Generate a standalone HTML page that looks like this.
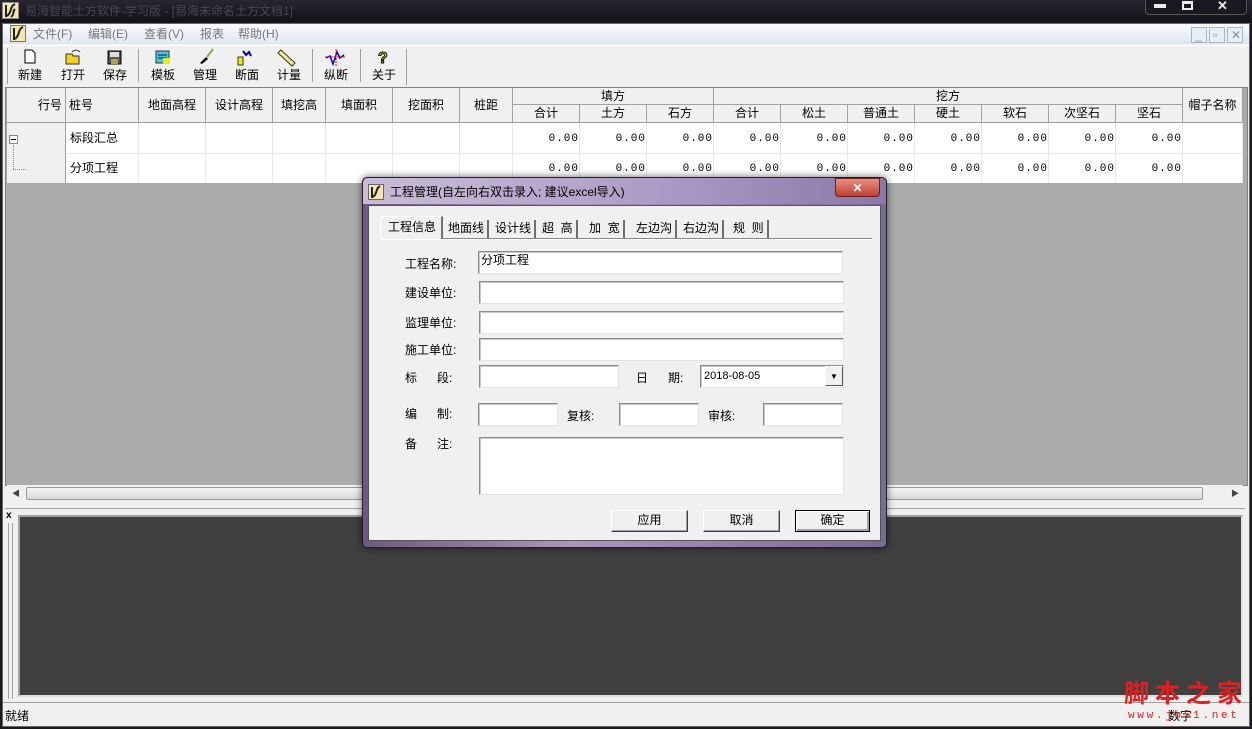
<!DOCTYPE html>
<html><head><meta charset="utf-8"><style>
*{box-sizing:border-box;margin:0;padding:0}
body{width:1252px;height:729px;overflow:hidden;background:#1c1a20;font-family:"Liberation Sans","WenQuanYi Zen Hei","Noto Sans CJK SC",sans-serif;font-size:12px;color:#000;position:relative}
.a{position:absolute}
.t{position:absolute;white-space:nowrap;line-height:14px}
.hc{position:absolute;background:#f0f0f0;border-right:1px solid #a0a0a0;border-bottom:1px solid #a0a0a0;text-align:center;line-height:16px}
.vc{position:absolute;text-align:right;font-family:"Liberation Mono",monospace;font-size:11px;line-height:14px;letter-spacing:1px}
.inp{position:absolute;background:#fff;border:1px solid #8a8a8a;border-right-color:#e4e4e4;border-bottom-color:#e4e4e4;box-shadow:inset 1px 1px 0 #c8c8c8}
.btn{position:absolute;background:#f0f0f0;border:1px solid #fff;border-right-color:#404040;border-bottom-color:#404040;box-shadow:inset -1px -1px 0 #a0a0a0;text-align:center;line-height:18px}
.tab{position:absolute;top:220px;height:18px;line-height:16px;border-right:2px solid #707070;padding:0 3px}
</style></head><body>
<div class="a" style="left:0;top:0;width:1252px;height:22px;background:linear-gradient(#2a2630,#141218)"></div>
<div class="a" style="left:2px;top:2px;width:17px;height:17px;background:#f4e6b0;border:1px solid #888"><svg width="15" height="15"><path d="M3 14 L3 2 M12 1 C6 4 10 8 4 13 M12 6 C9 9 12 11 8 14" stroke="#222" stroke-width="2" fill="none"/></svg></div>
<div class="t" style="left:25px;top:4px;color:#4a4550;font-size:12px">易海智能土方软件-学习版 - [易海未命名土方文档1]</div>
<div class="a" style="left:1145px;top:0;width:102px;height:15px;border:1px solid #555;border-top:none;border-radius:0 0 4px 4px;background:#1a1820"></div>
<div class="a" style="left:1154px;top:4px;width:12px;height:4px;background:#eee"></div>
<div class="a" style="left:1182px;top:1px;width:11px;height:9px;border:2px solid #eee;border-top-width:3px"></div>
<div class="t" style="left:1217px;top:-1px;color:#eee;font-weight:bold;font-size:13px">✕</div>
<div class="a" style="left:2px;top:23px;width:1248px;height:704px;background:#f0f0f0;border:1px solid #666"></div>
<div class="a" style="left:3px;top:24px;width:1246px;height:20px;background:linear-gradient(#fafcff,#dfe6f0)"></div>
<div class="a" style="left:10px;top:25px;width:16px;height:17px;background:#f4e6b0;border:1px solid #777"><svg width="14" height="15"><path d="M3 14 L3 2 M12 1 C6 4 10 8 4 13" stroke="#222" stroke-width="2" fill="none"/></svg></div>
<div class="t" style="left:33px;top:27px;color:#777">文件(F)</div>
<div class="t" style="left:88px;top:27px;color:#777">编辑(E)</div>
<div class="t" style="left:144px;top:27px;color:#777">查看(V)</div>
<div class="t" style="left:200px;top:27px;color:#777">报表</div>
<div class="t" style="left:238px;top:27px;color:#777">帮助(H)</div>
<div class="a" style="left:1191px;top:27px;width:16px;height:16px;border:1px solid #a8b8c8;background:#e6eef6"></div>
<div class="a" style="left:1209px;top:27px;width:16px;height:16px;border:1px solid #a8b8c8;background:#e6eef6"></div>
<div class="a" style="left:1227px;top:27px;width:16px;height:16px;border:1px solid #a8b8c8;background:#e6eef6"></div>
<div class="t" style="left:1195px;top:28px;color:#889">_</div><div class="t" style="left:1213px;top:28px;color:#889">▫</div><div class="t" style="left:1231px;top:28px;color:#889">✕</div>
<div class="a" style="left:3px;top:45px;width:1246px;height:42px;background:#f0f0f0;border-top:1px solid #fff"></div>
<div class="a" style="left:7px;top:48px;width:1px;height:36px;background:#a0a0a0"></div>
<div class="a" style="left:138px;top:49px;width:1px;height:33px;background:#a0a0a0"></div>
<div class="a" style="left:312px;top:49px;width:1px;height:33px;background:#a0a0a0"></div>
<div class="a" style="left:360px;top:49px;width:1px;height:33px;background:#a0a0a0"></div>
<div class="a" style="left:406px;top:49px;width:1px;height:36px;background:#a0a0a0"></div>
<svg class="a" style="left:0;top:48px" width="410" height="20">
<path d="M25 2h7l3 3v10h-10z" fill="#fff" stroke="#000"/>
<path d="M66 6h6l1 2h6v8h-13z" fill="#f0d020" stroke="#333"/><path d="M72 4c3-3 6-2 8 0" stroke="#333" fill="none"/>
<rect x="108" y="3" width="13" height="13" fill="#555" stroke="#000"/><rect x="110" y="4" width="9" height="5" fill="#ddd"/><rect x="111" y="11" width="7" height="5" fill="#aa4"/>
<rect x="156" y="3" width="13" height="12" fill="#4cc" stroke="#333"/><path d="M158 7h9M158 10h9" stroke="#00a"/><rect x="163" y="10" width="7" height="6" fill="#ee0"/>
<path d="M200 15 l6-6 l2 2 l-6 5z" fill="#000"/><path d="M207 9 l6-8" stroke="#8a5" stroke-width="2"/>
<rect x="238" y="9" width="5" height="8" fill="#ee0" stroke="#333"/><path d="M243 3 l3 4 l3-3 l2 4" stroke="#00a" stroke-width="2" fill="none"/>
<path d="M281 2 l14 13 l-3 3 l-14-13z" fill="#ee8" stroke="#333"/>
<path d="M326 10 l4-2 l3 8 l4-12 l3 6 l4-3" stroke="#00c" fill="none" stroke-width="1.5"/><path d="M336 1v18M325 9h20" stroke="#e00" stroke-dasharray="2 1"/>
<text x="378" y="15" font-size="16" font-weight="bold" fill="#ee0" stroke="#000" stroke-width="1" font-family="Liberation Sans">?</text>
</svg>
<div class="t" style="left:18px;top:68px">新建</div><div class="t" style="left:61px;top:68px">打开</div><div class="t" style="left:103px;top:68px">保存</div>
<div class="t" style="left:151px;top:68px">模板</div><div class="t" style="left:193px;top:68px">管理</div><div class="t" style="left:235px;top:68px">断面</div><div class="t" style="left:277px;top:68px">计量</div>
<div class="t" style="left:324px;top:68px">纵断</div><div class="t" style="left:372px;top:68px">关于</div>
<div class="a" style="left:5px;top:87px;width:1243px;height:399px;background:#ababab;border:1px solid #808080"></div>
<div class="a" style="left:7px;top:88px;width:1236px;height:95px;background:#fff"></div>
<div class="hc" style="left:7px;top:88px;width:59px;height:35px;text-align:right;padding-right:3px;line-height:34px">行号</div>
<div class="hc" style="left:66px;top:88px;width:73px;height:35px;text-align:left;padding-left:3px;line-height:34px">桩号</div>
<div class="hc" style="left:139px;top:88px;width:67px;height:35px;line-height:34px">地面高程</div>
<div class="hc" style="left:206px;top:88px;width:67px;height:35px;line-height:34px">设计高程</div>
<div class="hc" style="left:273px;top:88px;width:53px;height:35px;line-height:34px">填挖高</div>
<div class="hc" style="left:326px;top:88px;width:67px;height:35px;line-height:34px">填面积</div>
<div class="hc" style="left:393px;top:88px;width:67px;height:35px;line-height:34px">挖面积</div>
<div class="hc" style="left:460px;top:88px;width:53px;height:35px;line-height:34px">桩距</div>
<div class="hc" style="left:513px;top:88px;width:201px;height:17px">填方</div>
<div class="hc" style="left:714px;top:88px;width:469px;height:17px">挖方</div>
<div class="hc" style="left:1183px;top:88px;width:60px;height:35px;line-height:34px">帽子名称</div>
<div class="hc" style="left:513px;top:105px;width:67px;height:18px">合计</div>
<div class="hc" style="left:580px;top:105px;width:67px;height:18px">土方</div>
<div class="hc" style="left:647px;top:105px;width:67px;height:18px">石方</div>
<div class="hc" style="left:714px;top:105px;width:67px;height:18px">合计</div>
<div class="hc" style="left:781px;top:105px;width:67px;height:18px">松土</div>
<div class="hc" style="left:848px;top:105px;width:67px;height:18px">普通土</div>
<div class="hc" style="left:915px;top:105px;width:67px;height:18px">硬土</div>
<div class="hc" style="left:982px;top:105px;width:67px;height:18px">软石</div>
<div class="hc" style="left:1049px;top:105px;width:67px;height:18px">次坚石</div>
<div class="hc" style="left:1116px;top:105px;width:67px;height:18px">坚石</div>
<div class="a" style="left:7px;top:123px;width:59px;height:60px;background:#f0f0f0;border-right:1px solid #a0a0a0"></div>
<div class="a" style="left:9px;top:135px;width:9px;height:9px;border:1px solid #888;background:#fff"></div><div class="a" style="left:11px;top:139px;width:5px;height:1px;background:#000"></div>
<div class="a" style="left:13px;top:145px;width:1px;height:24px;border-left:1px dotted #888"></div><div class="a" style="left:13px;top:169px;width:13px;border-top:1px dotted #888"></div>
<div class="a" style="left:66px;top:153px;width:1177px;height:1px;background:#e8e8e8"></div>
<div class="t" style="left:70px;top:131px">标段汇总</div><div class="t" style="left:70px;top:161px">分项工程</div>
<div id="vals"></div>
<script>
var xs=[513,580,647,714,781,848,915,982,1049,1116,1183,1243,139,206,273,326,393,460],h='';
for(var i=0;i<xs.length;i++)h+='<div class="a" style="left:'+(xs[i]-1)+'px;top:123px;width:1px;height:60px;background:#e8e8e8"></div>';
for(var r=0;r<2;r++)for(var i=0;i<10;i++)h+='<div class="vc" style="left:'+(513+i*67)+'px;top:'+(132+r*30)+'px;width:66px">0.00</div>';
document.getElementById('vals').innerHTML=h;
</script>
<div class="a" style="left:7px;top:485px;width:1236px;height:17px;background:#f0f0f0"></div>
<div class="a" style="left:26px;top:487px;width:1177px;height:13px;background:linear-gradient(#f4f4f4,#d8d8d8);border:1px solid #999;border-radius:2px"></div>
<div class="t" style="left:12px;top:487px;font-size:8px;color:#444">◀</div><div class="t" style="left:1231px;top:487px;font-size:8px;color:#444">▶</div>
<div class="a" style="left:5px;top:508px;width:1240px;height:193px;border-top:1px solid #a0a0a0"></div>
<div class="t" style="left:6px;top:509px;font-weight:bold;font-size:10px">x</div>
<div class="a" style="left:8px;top:523px;width:5px;height:176px;border-left:1px solid #a0a0a0;border-right:1px solid #a0a0a0"></div>
<div class="a" style="left:18px;top:515px;width:1225px;height:182px;background:#404040;border:2px solid #a0a0a0;border-right-color:#e0e0e0;border-bottom-color:#e0e0e0"></div>
<div class="a" style="left:3px;top:702px;width:1246px;height:1px;background:#a0a0a0"></div>
<div class="t" style="left:5px;top:709px">就绪</div>
<div class="t" style="left:1168px;top:709px">数字</div>
<div class="t" style="left:1124px;top:678px;color:#e02020;font-size:25px;font-weight:bold;font-family:'WenQuanYi Zen Hei','Noto Sans CJK SC',sans-serif;letter-spacing:6px;line-height:28px">脚本之家</div>
<div class="t" style="left:1128px;top:709px;color:#e02020;font-size:11px;letter-spacing:2.7px;font-family:'Liberation Mono',monospace">www.jb51.net</div>
<div class="a" style="left:362px;top:177px;width:525px;height:371px;background:linear-gradient(90deg,#6a5a80,#a898c0 40%,#7a6a96);border:1px solid #222;border-radius:5px;box-shadow:0 0 8px rgba(0,0,0,.6)"></div>
<div class="a" style="left:363px;top:178px;width:523px;height:26px;background:linear-gradient(90deg,#c8bcd8,#b0a0c8 50%,#8a78a8);border-radius:5px 5px 0 0"></div>
<div class="a" style="left:368px;top:184px;width:16px;height:16px;background:#f4e6b0;border:1px solid #666"><svg width="14" height="14"><path d="M3 13 L3 2 M11 1 C6 4 9 8 4 12" stroke="#222" stroke-width="2" fill="none"/></svg></div>
<div class="t" style="left:390px;top:185px">工程管理(自左向右双击录入; 建议excel导入)</div>
<div class="a" style="left:835px;top:178px;width:45px;height:19px;background:linear-gradient(#e89080,#c04030);border:1px solid #622;border-radius:0 0 4px 4px;color:#fff;font-weight:bold;text-align:center;line-height:18px">✕</div>
<div class="a" style="left:368px;top:205px;width:513px;height:336px;background:#f0f0f0;border:1px solid #555"></div>
<div class="a" style="left:380px;top:238px;width:492px;height:2px;background:#888;border-bottom:1px solid #fff"></div>
<div class="a" style="left:380px;top:216px;width:63px;height:23px;background:#f0f0f0;border:1px solid #fff;border-right:2px solid #707070;border-bottom:none"></div>
<div class="t" style="left:388px;top:220px">工程信息</div>
<div class="tab" style="left:445px">地面线</div>
<div class="tab" style="left:492px">设计线</div>
<div class="tab" style="left:539px">超&nbsp;&nbsp;高</div>
<div class="tab" style="left:586px">加&nbsp;&nbsp;宽</div>
<div class="tab" style="left:633px">左边沟</div>
<div class="tab" style="left:680px">右边沟</div>
<div class="tab" style="left:730px">规&nbsp;&nbsp;则</div>
<div class="t" style="left:405px;top:257px">工程名称:</div>
<div class="t" style="left:405px;top:286px">建设单位:</div>
<div class="t" style="left:405px;top:316px">监理单位:</div>
<div class="t" style="left:405px;top:343px">施工单位:</div>
<div class="t" style="left:405px;top:371px">标&nbsp;&nbsp;&nbsp;&nbsp;&nbsp;&nbsp;段:</div>
<div class="t" style="left:636px;top:371px">日&nbsp;&nbsp;&nbsp;&nbsp;&nbsp;&nbsp;期:</div>
<div class="t" style="left:405px;top:407px">编&nbsp;&nbsp;&nbsp;&nbsp;&nbsp;&nbsp;制:</div>
<div class="t" style="left:567px;top:409px">复核:</div>
<div class="t" style="left:708px;top:409px">审核:</div>
<div class="t" style="left:405px;top:437px">备&nbsp;&nbsp;&nbsp;&nbsp;&nbsp;&nbsp;注:</div>
<div class="inp" style="left:478px;top:251px;width:365px;height:23px"></div><div class="t" style="left:481px;top:253px">分项工程</div>
<div class="inp" style="left:479px;top:281px;width:365px;height:23px"></div>
<div class="inp" style="left:479px;top:311px;width:365px;height:23px"></div>
<div class="inp" style="left:479px;top:338px;width:365px;height:23px"></div>
<div class="inp" style="left:479px;top:365px;width:140px;height:23px"></div>
<div class="inp" style="left:700px;top:365px;width:144px;height:23px"></div>
<div class="t" style="left:704px;top:369px;font-size:11px">2018-08-05</div>
<div class="a" style="left:825px;top:366px;width:18px;height:20px;background:#f0f0f0;border:1px solid #fff;border-right-color:#555;border-bottom-color:#555;font-size:8px;text-align:center;line-height:19px">▼</div>
<div class="inp" style="left:478px;top:403px;width:80px;height:23px"></div>
<div class="inp" style="left:619px;top:403px;width:80px;height:23px"></div>
<div class="inp" style="left:763px;top:403px;width:80px;height:23px"></div>
<div class="inp" style="left:479px;top:437px;width:365px;height:58px"></div>
<div class="btn" style="left:611px;top:510px;width:77px;height:22px">应用</div>
<div class="btn" style="left:703px;top:510px;width:77px;height:22px">取消</div>
<div class="btn" style="left:795px;top:510px;width:75px;height:22px;border:1px solid #000;box-shadow:inset 1px 1px 0 #fff,inset -2px -2px 0 #a0a0a0">确定</div>
</body></html>
